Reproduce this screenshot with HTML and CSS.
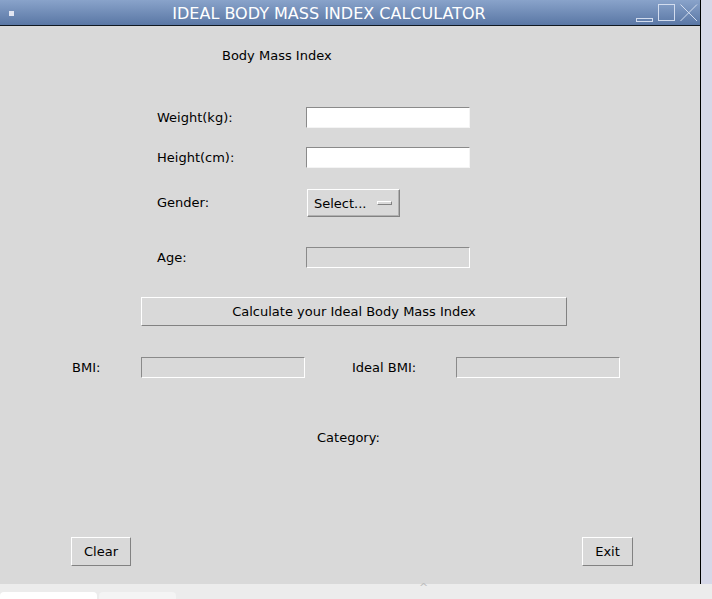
FILE: index.html
```html
<!DOCTYPE html>
<html>
<head>
<meta charset="utf-8">
<link rel="stylesheet" href="styles.css">
</head>
<body>
<div class="screen">
  <div class="top">
    <div class="window">
      <div class="titlebar">
        <div class="app-icon"></div>
        <div class="title">IDEAL BODY MASS INDEX CALCULATOR</div>
        <div class="controls">
          <svg class="ctl" width="18" height="18" viewBox="0 0 18 18"><rect x="0.5" y="14.5" width="16" height="3" fill="none" stroke="#d2dcee" stroke-width="1"/></svg>
          <svg class="ctl" width="18" height="18" viewBox="0 0 18 18"><rect x="0.5" y="0.5" width="16" height="16" fill="none" stroke="#d2dcee" stroke-width="1"/></svg>
          <svg class="ctl" width="18" height="18" viewBox="0 0 18 18"><path d="M0.5 0.5 L17 17 M17 0.5 L0.5 17" stroke="#d2dcee" stroke-width="1" fill="none"/></svg>
        </div>
      </div>
      <div class="content">
        <div class="heading">Body Mass Index</div>
        <div class="field f-weight"><span class="field-label">Weight(kg):</span><div class="entry"></div></div>
        <div class="field f-height"><span class="field-label">Height(cm):</span><div class="entry"></div></div>
        <div class="field f-gender"><span class="field-label">Gender:</span><div class="menubutton"><span>Select...</span><span class="indicator"></span></div></div>
        <div class="field f-age"><span class="field-label">Age:</span><div class="entry entry-disabled"></div></div>
        <div class="calc-row"><div class="btn btn-calc">Calculate your Ideal Body Mass Index</div></div>
        <div class="result-row">
          <span class="res-label">BMI:</span>
          <div class="entry entry-disabled"></div>
          <span class="res-label ideal-label">Ideal BMI:</span>
          <div class="entry entry-disabled"></div>
        </div>
        <div class="category">Category:</div>
        <div class="action-row">
          <div class="btn btn-clear">Clear</div>
          <div class="btn btn-exit">Exit</div>
        </div>
      </div>
    </div>
    <div class="side"></div>
  </div>
  <div class="taskbar">
    <div class="tab tab-active"></div>
    <div class="tab tab-other"></div>
    <div class="chevron">^</div>
  </div>
</div>
</body>
</html>
```
FILE: styles.css
```css
html, body {
  margin: 0;
  padding: 0;
  width: 712px;
  height: 599px;
  overflow: hidden;
  background: #ececec;
}
.screen {
  width: 712px;
  height: 599px;
  display: flex;
  flex-direction: column;
  font-family: "DejaVu Sans", sans-serif;
}
.top {
  display: flex;
  height: 584px;
}
.window {
  width: 701px;
  box-sizing: border-box;
  border-right: 1px solid #000;
  display: flex;
  flex-direction: column;
}
.side {
  flex: 1;
  background: #d6d8e8;
}
.titlebar {
  height: 26px;
  box-sizing: border-box;
  border-bottom: 1px solid #101820;
  background: linear-gradient(#89a3ca, #5a77a5);
  display: flex;
  align-items: flex-start;
}
.app-icon {
  width: 5px;
  height: 5px;
  background: #e2e6f2;
  margin: 11px 0 0 9px;
}
.title {
  flex: 1;
  color: #fff;
  font-size: 16px;
  line-height: 16px;
  padding-top: 6px;
  text-align: center;
  padding-left: 8px;
}
.controls {
  display: flex;
  gap: 4px;
  padding-top: 4px;
  padding-right: 2px;
}
.ctl {
  display: block;
}
.content {
  flex: 1;
  background: #d9d9d9;
  display: flex;
  flex-direction: column;
  font-size: 13px;
  color: #000;
}
.heading {
  margin-top: 20px;
  height: 20px;
  line-height: 20px;
  padding-left: 222px;
}
.field {
  display: flex;
  align-items: center;
  padding-left: 157px;
}
.field-label {
  width: 149px;
  margin-top: -1px;
}
.f-weight { margin-top: 41px; }
.f-height { margin-top: 19px; }
.f-gender { margin-top: 21px; }
.f-gender .field-label { width: 150px; }
.f-age { margin-top: 30px; }
.entry {
  width: 164px;
  height: 21px;
  box-sizing: border-box;
  border: 1px solid;
  border-color: #8a8a8a #f4f4f4 #f4f4f4 #8a8a8a;
  background: #fff;
}
.entry-disabled {
  background: #d9d9d9;
  border-color: #8a8a8a #fff #fff #8a8a8a;
}
.menubutton {
  width: 93px;
  height: 28px;
  box-sizing: border-box;
  border: 1px solid;
  border-color: #fff #828282 #828282 #fff;
  box-shadow: inset -1px -1px 0 #b0b0b0;
  background: #d9d9d9;
  display: flex;
  align-items: center;
  padding-left: 6px;
  padding-right: 7px;
}
.indicator {
  margin-left: auto;
  width: 15px;
  height: 4px;
  box-sizing: border-box;
  border: 1px solid;
  border-color: #fff #828282 #828282 #fff;
  background: #d9d9d9;
}
.calc-row {
  margin-top: 29px;
  padding-left: 141px;
  display: flex;
}
.btn {
  box-sizing: border-box;
  border: 1px solid;
  border-color: #fff #828282 #828282 #fff;
  background: #d9d9d9;
  height: 29px;
  display: flex;
  align-items: center;
  justify-content: center;
}
.btn-calc {
  width: 426px;
}
.result-row {
  margin-top: 31px;
  padding-left: 72px;
  display: flex;
  align-items: center;
}
.res-label {
  width: 69px;
  margin-top: -1px;
}
.ideal-label {
  margin-left: 47px;
  width: 104px;
}
.category {
  margin-top: 50px;
  height: 20px;
  line-height: 20px;
  padding-left: 317px;
}
.action-row {
  margin-top: 89px;
  padding-left: 71px;
  padding-right: 67px;
  display: flex;
  justify-content: space-between;
}
.btn-clear { width: 60px; }
.btn-exit { width: 51px; }
.taskbar {
  flex: 1;
  background: #ececec;
  display: flex;
  align-items: flex-end;
  position: relative;
}
.tab {
  height: 7px;
  border-radius: 4px 4px 0 0;
}
.tab-active {
  width: 97px;
  background: #ffffff;
}
.tab-other {
  width: 77px;
  margin-left: 2px;
  background: #f4f4f4;
}
.chevron {
  position: absolute;
  left: 419px;
  top: -2px;
  font-size: 11px;
  color: #bdbdbd;
  line-height: 12px;
}
```
